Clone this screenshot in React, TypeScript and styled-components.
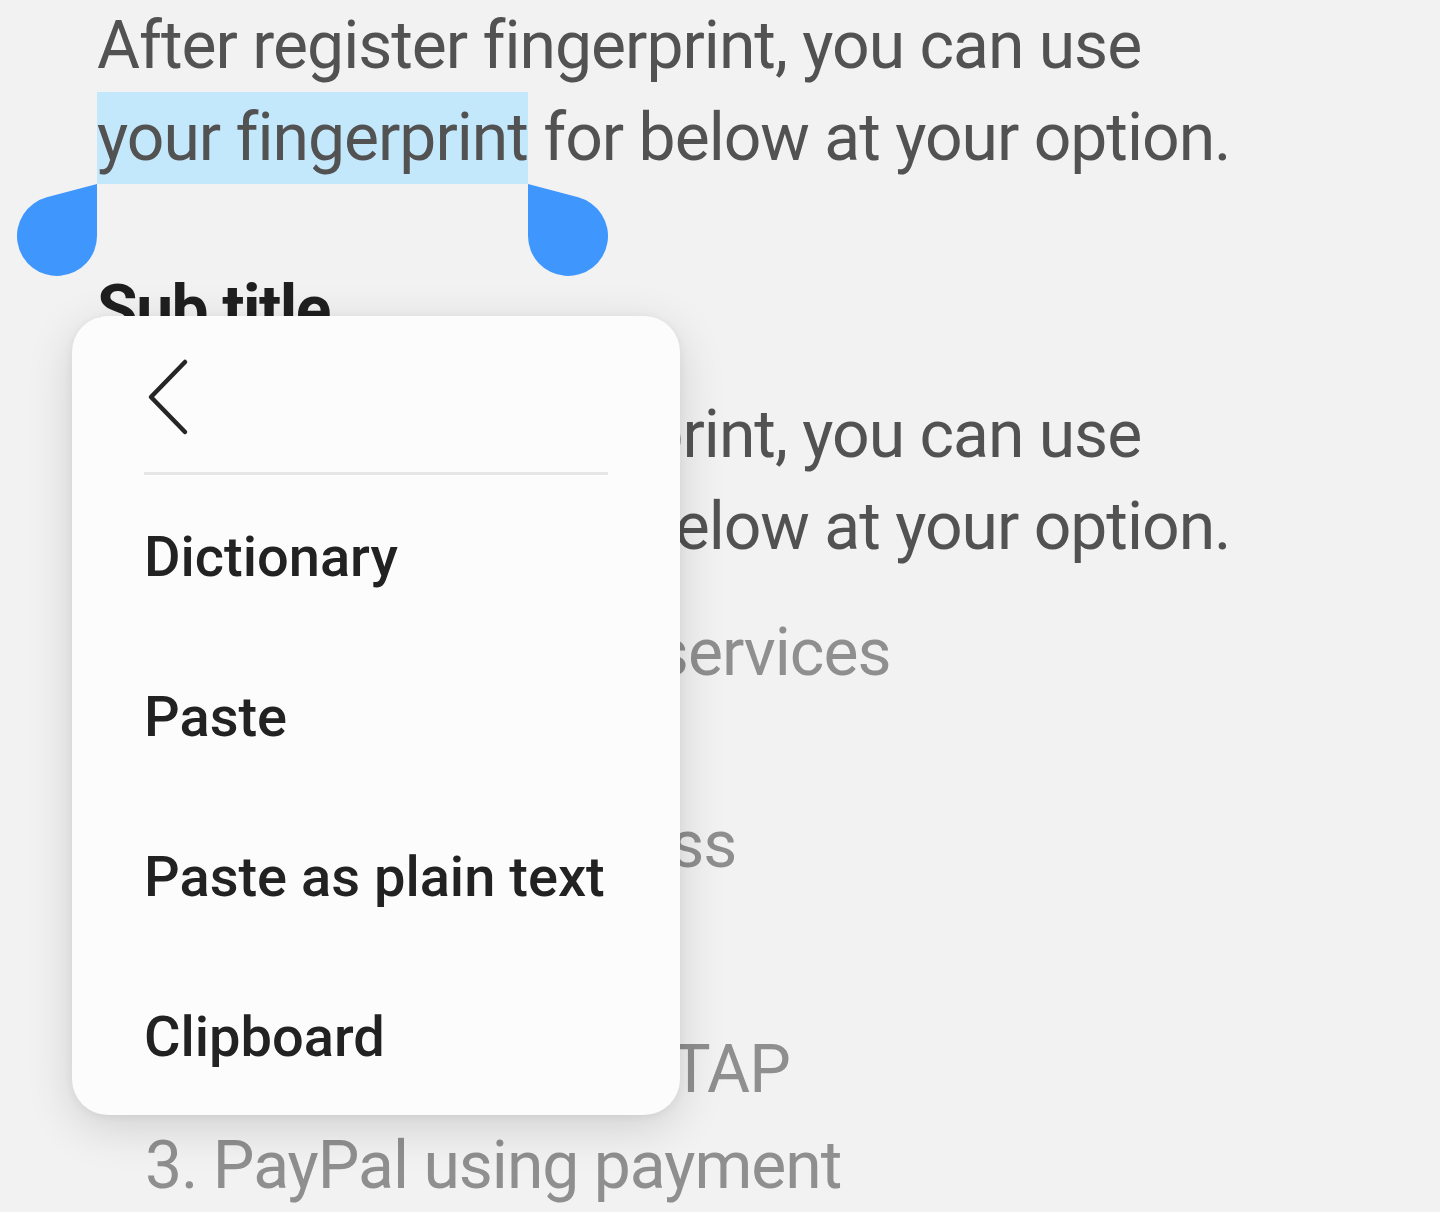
import React from 'react';
import styled, { createGlobalStyle } from 'styled-components';

const GlobalStyle = createGlobalStyle`
  html, body {
    margin: 0;
    padding: 0;
    background: #f2f2f2;
  }

  body {
    font-family: Roboto, 'Noto Sans', sans-serif;
  }
`;

const menuItems = ['Dictionary', 'Paste', 'Paste as plain text', 'Clipboard'];

const grayLines = [
  { text: '1. Samsung Pass services', gap: 0 },
  { text: '    Web sign-in', gap: 0 },
  { text: '2. Fingerprint access', gap: 0 },
  { text: '    Verify identity', gap: 0 },
  { text: 'Samsung Pay and TAP', gap: 33 },
  { text: '3. PayPal using payment', gap: 0 },
];

const HandleLeft = () => (
  <LeftHandle width="84" height="96" viewBox="0 0 84 96">
    <path d="M84 0 L84 52 A40 40 0 1 1 33.75 13.3 Z" fill="#3f97fd" />
  </LeftHandle>
);

const HandleRight = () => (
  <RightHandle width="84" height="96" viewBox="0 0 84 96">
    <path d="M0 0 L0 52 A40 40 0 1 0 50.25 13.3 Z" fill="#3f97fd" />
  </RightHandle>
);

const App: React.FC = () => {
  return (
    <Screen>
      <GlobalStyle />
      <Content>
        <Paragraph>
          After register fingerprint, you can use
          <br />
          <Selected>
            your fingerprint
            <HandleLeft />
            <HandleRight />
          </Selected>{' '}
          for below at your option.
        </Paragraph>
        <SubTitle>Sub title</SubTitle>
        <Paragraph $top={33}>
          After register fingerprint, you can use
          <br />
          your fingerprint for below at your option.
        </Paragraph>
        <GrayList>
          {grayLines.map(line => (
            <GrayLine key={line.text} $gap={line.gap}>
              {line.text}
            </GrayLine>
          ))}
        </GrayList>
      </Content>

      <Menu>
        <MenuHeader>
          <BackIcon width="48" height="80" viewBox="0 0 48 80">
            <polyline
              points="41,6 7,41 41,76"
              fill="none"
              stroke="#262626"
              strokeWidth="4.5"
              strokeLinecap="round"
              strokeLinejoin="round"
            />
          </BackIcon>
        </MenuHeader>
        <Divider />
        {menuItems.map(item => (
          <MenuItem key={item}>{item}</MenuItem>
        ))}
      </Menu>
    </Screen>
  );
};

const Screen = styled.div`
  position: relative;
  width: 1440px;
  height: 1212px;
  overflow: hidden;
  background: #f2f2f2;
`;

const Content = styled.div`
  padding: 0 0 0 97px;
`;

const Paragraph = styled.p<{ $top?: number }>`
  margin: ${p => p.$top ?? 0}px 0 0;
  font-size: 66px;
  line-height: 92px;
  letter-spacing: -1px;
  color: #525252;
  white-space: nowrap;
`;

const Selected = styled.span`
  position: relative;
  display: inline-block;
  background: #c4e8fb;
`;

const LeftHandle = styled.svg`
  position: absolute;
  top: 100%;
  left: -84px;
`;

const RightHandle = styled.svg`
  position: absolute;
  top: 100%;
  right: -84px;
`;

const SubTitle = styled.h2`
  margin: 80px 0 0;
  font-size: 66px;
  line-height: 92px;
  font-weight: 700;
  letter-spacing: -1.5px;
  color: #1f1f1f;
`;

const GrayList = styled.div`
  margin-top: 32px;
  padding-left: 48px;
  font-size: 66px;
  line-height: 96px;
  letter-spacing: -1px;
  color: #8f8f8f;
`;

const GrayLine = styled.div<{ $gap: number }>`
  margin-top: ${p => p.$gap}px;
  white-space: pre;
`;

const Menu = styled.div`
  position: absolute;
  left: 72px;
  top: 316px;
  width: 608px;
  height: 799px;
  box-sizing: border-box;
  padding: 0 72px;
  display: flex;
  flex-direction: column;
  border-radius: 36px;
  background: #fcfcfc;
  box-shadow: 0 12px 48px rgba(0, 0, 0, 0.14), 0 2px 10px rgba(0, 0, 0, 0.06);
`;

const MenuHeader = styled.div`
  height: 156px;
  padding-top: 4px;
  box-sizing: border-box;
  display: flex;
  align-items: center;
`;

const BackIcon = styled.svg`
  display: block;
`;

const Divider = styled.div`
  height: 3px;
  background: #e6e6e6;
`;

const MenuItem = styled.div`
  height: 160px;
  padding-top: 4px;
  box-sizing: border-box;
  display: flex;
  align-items: center;
  font-size: 56px;
  font-weight: 500;
  color: #222222;
  white-space: nowrap;
`;

export default App;
